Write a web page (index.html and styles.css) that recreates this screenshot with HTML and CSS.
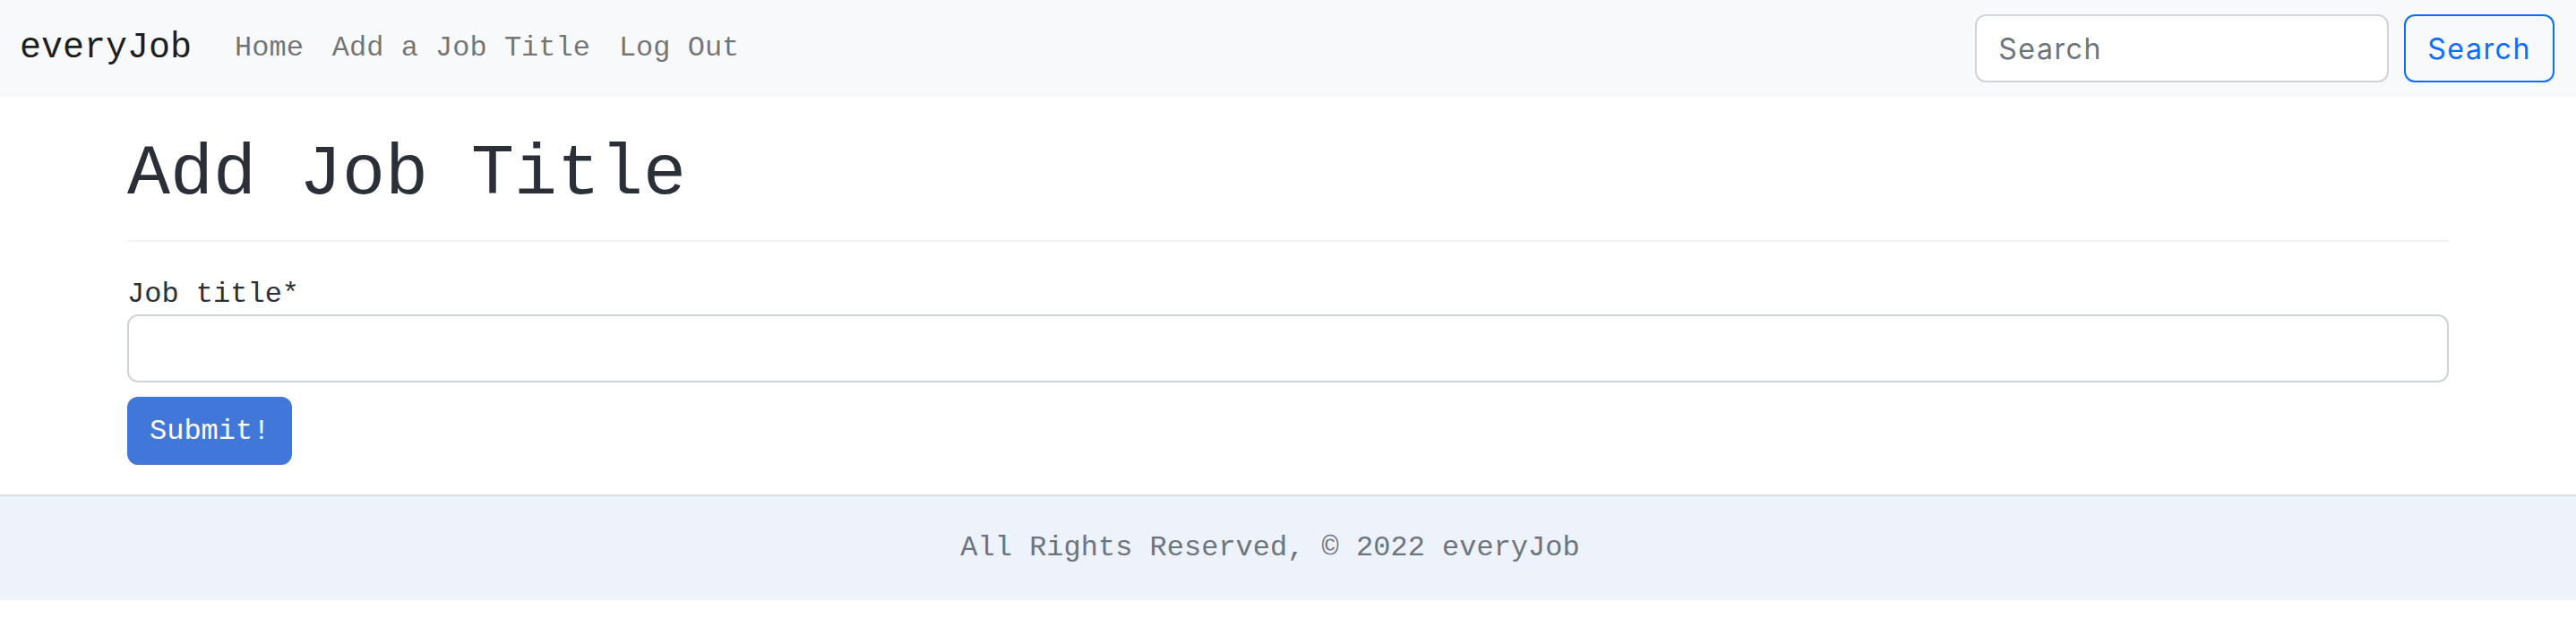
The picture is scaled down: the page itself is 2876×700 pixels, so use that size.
FILE: index.html
```html
<!DOCTYPE html>
<html lang="en">
<head>
<meta charset="utf-8">
<title>everyJob - Add Job Title</title>
<link rel="stylesheet" href="styles.css">
</head>
<body>
<nav class="navbar">
  <div class="nav-left">
    <a class="brand" href="#">everyJob</a>
    <ul class="nav-links">
      <li><a class="nav-link" href="#">Home</a></li>
      <li><a class="nav-link" href="#">Add a Job Title</a></li>
      <li><a class="nav-link" href="#">Log Out</a></li>
    </ul>
  </div>
  <form class="search-form">
    <input class="search-input" type="search" placeholder="Search">
    <button class="search-btn" type="button">Search</button>
  </form>
</nav>
<main class="container">
  <div class="page-header">
    <h1 class="title">Add Job Title</h1>
  </div>
  <form class="job-form">
    <label class="field-label" for="job-title">Job title*</label>
    <input class="field-input" id="job-title" type="text">
    <button class="submit-btn" type="button">Submit!</button>
  </form>
</main>
<footer class="footer">
  <p class="footer-text">All Rights Reserved, © 2022 everyJob</p>
</footer>
</body>
</html>
```

FILE: styles.css
```css
* {
  box-sizing: border-box;
}

html, body {
  margin: 0;
  padding: 0;
  background: #ffffff;
}

body {
  font-family: "Liberation Mono", "DejaVu Sans Mono", monospace;
  font-size: 32px;
  line-height: 1.5;
  color: #212529;
}

/* Navbar */
.navbar {
  display: flex;
  align-items: center;
  justify-content: space-between;
  height: 108px;
  padding: 0 24px 0 22px;
  background: #f8f9fa;
}

.nav-left {
  display: flex;
  align-items: center;
}

.brand {
  font-size: 40px;
  line-height: 60px;
  color: rgba(0, 0, 0, 0.9);
  text-decoration: none;
  margin-right: 32px;
}

.nav-links {
  display: flex;
  list-style: none;
  margin: 0;
  padding: 0;
}

.nav-link {
  display: block;
  padding: 16px;
  color: rgba(0, 0, 0, 0.55);
  text-decoration: none;
  line-height: 48px;
}

.search-form {
  display: flex;
  align-items: center;
  gap: 17px;
}

.search-input {
  width: 462px;
  height: 76px;
  padding: 12px 24px;
  border: 2px solid #ced4da;
  border-radius: 12px;
  background: #ffffff;
  font-family: "Inter", "Noto Sans", sans-serif;
  font-size: 32px;
  letter-spacing: 1.6px;
  color: #212529;
}

.search-input::placeholder {
  color: #6c757d;
}

.search-btn {
  height: 76px;
  padding: 0 24px;
  border: 2px solid #0d6efd;
  border-radius: 12px;
  background: transparent;
  color: #0d6efd;
  font-family: "Inter", "Noto Sans", sans-serif;
  font-size: 32px;
  letter-spacing: 1.6px;
}

/* Main */
.container {
  max-width: 2640px;
  margin: 0 auto;
  padding: 39px 24px 33px;
}

.page-header {
  padding-bottom: 25px;
  border-bottom: 2px solid #f2f2f2;
}

.title {
  margin: 0;
  font-size: 80px;
  font-weight: 400;
  line-height: 96px;
  color: #2b3038;
}

.job-form {
  display: flex;
  flex-direction: column;
  align-items: flex-start;
  margin-top: 37px;
}

.field-label {
  line-height: 44px;
  color: #2b3038;
}

.field-input {
  width: 100%;
  height: 76px;
  padding: 12px 24px;
  border: 2px solid #ced4da;
  border-radius: 12px;
  font-family: inherit;
  font-size: 32px;
}

.submit-btn {
  margin-top: 16px;
  height: 76px;
  padding: 0 25px;
  border: none;
  border-radius: 12px;
  background: #4177d8;
  color: #ffffff;
  font-family: inherit;
  font-size: 32px;
}

/* Footer */
.footer {
  border-top: 2px solid #dee2e6;
  background: #eef2fa;
  padding: 34px 40px 34px 0;
}

.footer-text {
  margin: 0;
  text-align: center;
  line-height: 48px;
  color: #6c757d;
}
```
